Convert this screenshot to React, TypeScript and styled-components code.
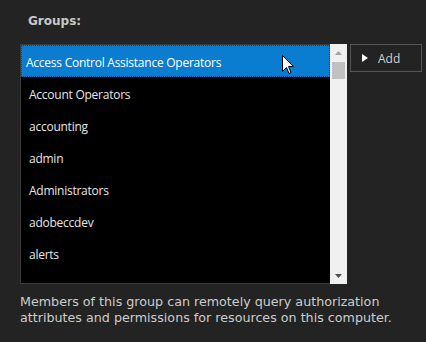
import React from "react";
import styled, { createGlobalStyle } from "styled-components";

const Global = createGlobalStyle`
  html, body { margin: 0; padding: 0; background: #232323; }
  body { width: 426px; height: 342px; overflow: hidden; }
`;

const Page = styled.div`
  padding: 13px 0 0 20px;
  font-family: "DejaVu Sans", Verdana, sans-serif;
  color: #cfcfcf;
`;

const Label = styled.div`
  font-weight: bold;
  font-size: 12px;
  line-height: 16px;
  padding-left: 8px;
  margin-bottom: 15px;
  color: #c8c8c8;
`;

const Row = styled.div`
  display: flex;
  align-items: flex-start;
  gap: 3px;
`;

const ListBox = styled.div`
  position: relative;
  display: flex;
  width: 326px;
  height: 238px;
  border: 1px solid #3a3a3a;
  border-right: none;
  background: #000;
`;

const Items = styled.div`
  flex: 1;
  overflow: hidden;
`;

const Item = styled.div<{ $selected?: boolean }>`
  height: 32px;
  box-sizing: border-box;
  display: flex;
  align-items: center;
  padding: 3px 0 0 ${(p) => (p.$selected ? "5px" : "8px")};
  font-family: "Open Sans", "Noto Sans", sans-serif;
  font-size: 12px;
  letter-spacing: -0.25px;
  white-space: nowrap;
  color: ${(p) => (p.$selected ? "#ffffff" : "#e6e6e6")};
  background: ${(p) => (p.$selected ? "#0a7dd0" : "transparent")};
  outline: ${(p) => (p.$selected ? "1px dotted #1d3d5a" : "none")};
  outline-offset: -1px;
`;

const ScrollBar = styled.div`
  width: 17px;
  margin-top: -1px;
  margin-bottom: -1px;
  background: #f0f0f0;
  display: flex;
  flex-direction: column;
  align-items: center;
`;

const ArrowBtn = styled.div`
  height: 17px;
  width: 17px;
  display: flex;
  align-items: center;
  justify-content: center;
`;

const Track = styled.div`
  flex: 1;
  width: 100%;
  display: flex;
  justify-content: center;
`;

const Thumb = styled.div`
  width: 13px;
  height: 17px;
  background: #c1c1c1;
  margin-top: 1px;
`;

const AddButton = styled.button`
  width: 72px;
  height: 28px;
  box-sizing: border-box;
  border: 1px solid #555;
  background: #232323;
  display: flex;
  align-items: center;
  padding: 0 0 0 11px;
  gap: 10px;
  font-family: "Open Sans", "Noto Sans", sans-serif;
  font-size: 12px;
  color: #d0d0d0;
`;

const Description = styled.p`
  margin: 10px 0 0 0;
  font-size: 12.7px;
  line-height: 16px;
  color: #cdcdcd;
`;

const Cursor = styled.svg`
  position: absolute;
  left: 261px;
  top: 10px;
`;

const items = [
  "Access Control Assistance Operators",
  "Account Operators",
  "accounting",
  "admin",
  "Administrators",
  "adobeccdev",
  "alerts",
];

export default function App() {
  return (
    <>
      <Global />
      <Page>
        <Label>Groups:</Label>
        <Row>
          <ListBox>
            <Items>
              {items.map((t, i) => (
                <Item key={t} $selected={i === 0}>
                  {t}
                </Item>
              ))}
            </Items>
            <ScrollBar>
              <ArrowBtn>
                <svg width="7" height="4" viewBox="0 0 7 4">
                  <polygon points="3.5,0 7,4 0,4" fill="#a3a3a3" />
                </svg>
              </ArrowBtn>
              <Track>
                <Thumb />
              </Track>
              <ArrowBtn>
                <svg width="7" height="4" viewBox="0 0 7 4">
                  <polygon points="0,0 7,0 3.5,4" fill="#505050" />
                </svg>
              </ArrowBtn>
            </ScrollBar>
            <Cursor width="13" height="20" viewBox="0 0 13 20">
              <polygon
                points="0.5,0.5 0.5,16.5 4.5,12.5 7,18.5 9,17.5 6.5,11.5 11.5,11.5"
                fill="#fff"
                stroke="#000"
                strokeWidth="1"
              />
            </Cursor>
          </ListBox>
          <AddButton>
            <svg width="6" height="8" viewBox="0 0 6 8">
              <polygon points="0,0 6,4 0,8" fill="#fff" />
            </svg>
            Add
          </AddButton>
        </Row>
        <Description>
          Members of this group can remotely query authorization
          <br />
          attributes and permissions for resources on this computer.
        </Description>
      </Page>
    </>
  );
}
